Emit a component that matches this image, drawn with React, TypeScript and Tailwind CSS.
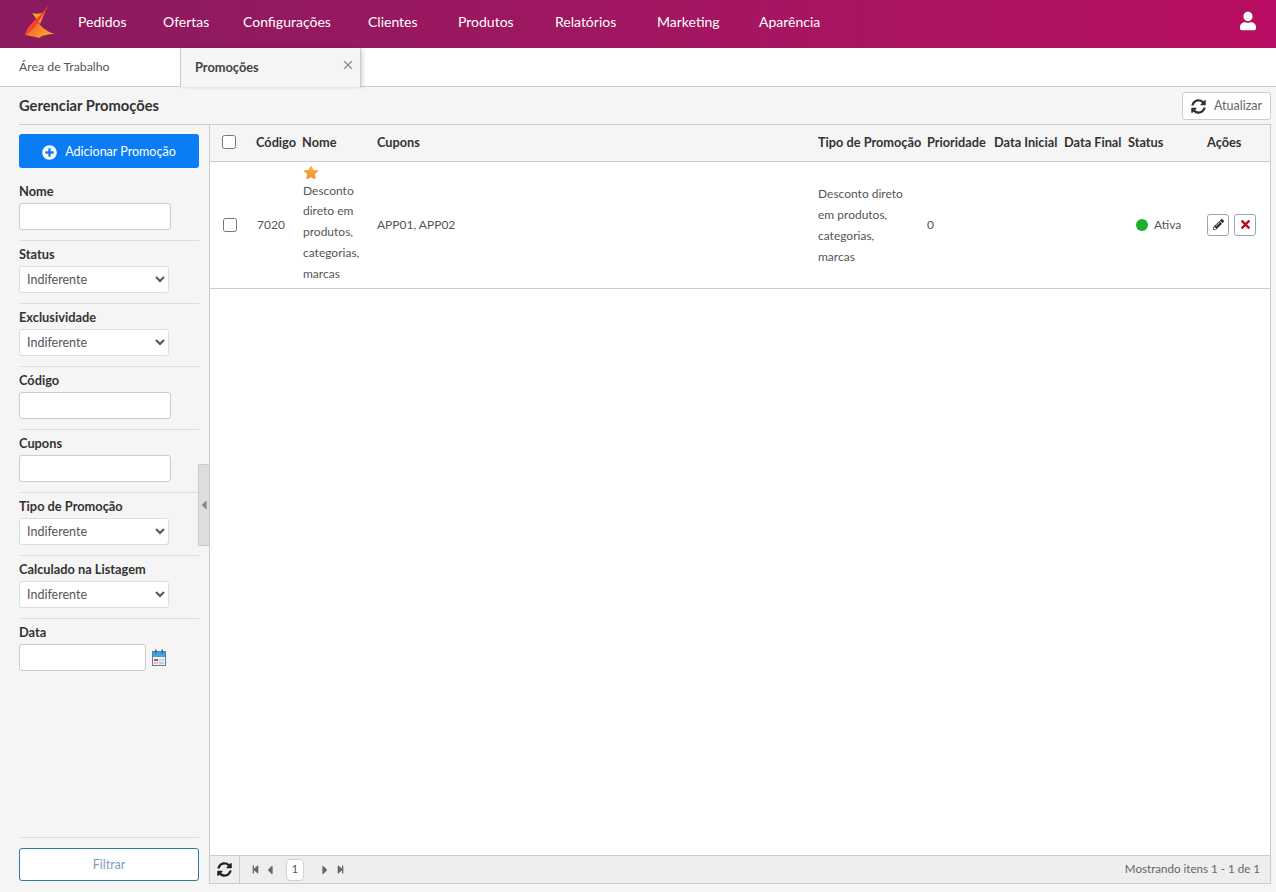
import { X } from "lucide-react";
import { FaUser, FaPencilAlt, FaTimes, FaSyncAlt, FaPlusCircle, FaStepBackward, FaStepForward, FaCaretLeft, FaCaretRight } from "react-icons/fa";

const menu = [
  { label: "Pedidos", width: "w-[85px]" },
  { label: "Ofertas", width: "w-[80px]" },
  { label: "Configurações", width: "w-[125px]" },
  { label: "Clientes", width: "w-[90px]" },
  { label: "Produtos", width: "w-[97px]" },
  { label: "Relatórios", width: "w-[102px]" },
  { label: "Marketing", width: "w-[102px]" },
  { label: "Aparência", width: "w-[70px]" },
];

const inputClass = "block h-[27px] rounded-[3px] border border-[#ccc] bg-white";

function SelectBox() {
  return (
    <select className="block h-[27px] w-[150px] rounded-[3px] border border-[#ddd] bg-white pl-[3px] text-[12.5px] text-[#555]">
      <option>Indiferente</option>
    </select>
  );
}

function Field({ label, type }: { label: string; type: "input" | "select" }) {
  return (
    <div className="h-[63px] border-b border-[#ddd] pt-[4px]">
      <div className="mb-[3px] h-[18px] text-[12.8px] font-bold leading-[18px] text-[#333]">{label}</div>
      {type === "input" ? <div className={`${inputClass} w-[152px]`} /> : <SelectBox />}
    </div>
  );
}

function Logo() {
  return (
    <svg width="34" height="38" viewBox="0 0 34 38" className="mt-[-4px]">
      <defs>
        <linearGradient id="blade" x1="0" y1="1" x2="1" y2="0">
          <stop offset="0" stopColor="#f8482c" />
          <stop offset="1" stopColor="#f2342f" />
        </linearGradient>
        <linearGradient id="foot" x1="0" y1="0" x2="1" y2="0.6">
          <stop offset="0" stopColor="#f4512b" />
          <stop offset="1" stopColor="#fbab2c" />
        </linearGradient>
      </defs>
      <path d="M9 10C13 11 18 11 22 9L17 21Z" fill="#f9a12a" />
      <path d="M15 19C19 25 25 29 32 31C25 31 20 32 16 35C10 33 6 33 2 32C7 29 12 24 15 19Z" fill="url(#foot)" />
      <path d="M27 0C24 6 20 12 16 18C12 24 7 29 2 32C3 27 6 23 9 20C14 15 22 8 27 0Z" fill="url(#blade)" />
    </svg>
  );
}

function StarIcon() {
  return (
    <svg width="16" height="15" viewBox="0 0 16 15" className="mb-[1px] block">
      <defs>
        <linearGradient id="star" x1="0" y1="0" x2="0" y2="1">
          <stop offset="0" stopColor="#fbb54a" />
          <stop offset="1" stopColor="#f0902a" />
        </linearGradient>
      </defs>
      <path d="M8 1.5 9.9 5.4 14.4 6 11.1 9 11.9 13.4 8 11.3 4.1 13.4 4.9 9 1.6 6 6.1 5.4Z" fill="url(#star)" stroke="url(#star)" strokeWidth="1.4" strokeLinejoin="round" />
    </svg>
  );
}

function CalendarIcon() {
  return (
    <svg width="14" height="17" viewBox="0 0 14 17">
      <rect x="0.5" y="2.5" width="13" height="14" fill="#f2f2f2" stroke="#6c7a86" />
      <rect x="1" y="3" width="12" height="5" fill="#3fa3e6" />
      <rect x="3" y="0.5" width="1.5" height="4" fill="#1f6aa5" />
      <rect x="9.5" y="0.5" width="1.5" height="4" fill="#1f6aa5" />
      <rect x="2" y="10" width="4" height="2" fill="#d04a4a" />
      <rect x="7" y="10" width="2" height="2" fill="#c9c9c9" />
      <rect x="10" y="10" width="2" height="2" fill="#c9c9c9" />
      <rect x="2" y="13" width="4" height="2" fill="#c9c9c9" />
      <rect x="7" y="13" width="5" height="2" fill="#c9c9c9" />
    </svg>
  );
}

export default function App() {
  const th = "px-[6px] text-left align-middle text-[12.75px] font-bold text-[#333] whitespace-nowrap";
  const td = "px-[7px] align-middle text-[12px] text-[#555]";
  return (
    <div className="flex h-screen flex-col overflow-hidden bg-[#f5f5f5] font-['Lato','Liberation_Sans',sans-serif] text-[13px]">
      <header className="flex h-[48px] shrink-0 items-center bg-gradient-to-r from-[#8a1a5e] to-[#b80d62] pl-[23px] pr-[20px]">
        <Logo />
        <nav className="mb-[6px] ml-[21px] flex text-[14px] text-white">
          {menu.map((m) => (
            <span key={m.label} className={m.width}>{m.label}</span>
          ))}
        </nav>
        <FaUser className="mb-[6px] ml-auto h-[20px] w-[16px] text-white" />
      </header>

      <div className="flex h-[39px] shrink-0 border-b border-[#ccc] bg-white">
        <div className="flex w-[180px] items-center pl-[19px] text-[12.3px] text-[#555]">Área de Trabalho</div>
        <div className="relative mb-[-1px] flex w-[181px] items-center border-x border-[#ccc] bg-[#f5f5f5] pl-[14px] text-[12.8px] font-bold text-[#444] shadow-[2px_0_4px_rgba(0,0,0,0.15)]">
          Promoções
          <X className="absolute right-[5px] top-[10px] h-[14px] w-[14px] text-[#888]" />
        </div>
      </div>

      <div className="flex h-[37px] shrink-0 items-center justify-between pl-[19px] pr-[5px]">
        <h1 className="text-[14.7px] font-bold text-[#333]">Gerenciar Promoções</h1>
        <button className="flex h-[28px] w-[89px] items-center justify-center gap-[8px] rounded-[3px] border border-[#ccc] bg-white pt-[1px] text-[12.5px] text-[#666]">
          <FaSyncAlt className="h-[15px] w-[15px] text-[#333]" />
          Atualizar
        </button>
      </div>

      <div className="relative ml-[19px] mr-[5px] mb-[8px] flex min-h-0 flex-1 border-t border-[#ccc]">
        <aside className="flex w-[191px] shrink-0 flex-col border-r border-[#ccc] pr-[10px] pt-[9px]">
          <button className="flex h-[34px] w-[180px] items-center justify-center gap-[8px] rounded-[3px] bg-[#0a7df5] pt-[2px] text-[12.5px] text-white">
            <FaPlusCircle className="h-[15px] w-[15px]" />
            Adicionar Promoção
          </button>
          <div className="mt-[10px] w-[180px]">
            <Field label="Nome" type="input" />
            <Field label="Status" type="select" />
            <Field label="Exclusividade" type="select" />
            <Field label="Código" type="input" />
            <Field label="Cupons" type="input" />
            <Field label="Tipo de Promoção" type="select" />
            <Field label="Calculado na Listagem" type="select" />
            <div className="pt-[4px]">
              <div className="mb-[3px] h-[18px] text-[12.8px] font-bold leading-[18px] text-[#333]">Data</div>
              <div className="flex items-center gap-[6px]">
                <div className={`${inputClass} w-[127px]`} />
                <CalendarIcon />
              </div>
            </div>
          </div>
          <div className="mt-auto w-[180px] border-t border-[#ddd] pt-[10px] pb-[3px]">
            <button className="h-[33px] w-full rounded-[3px] border border-[#2b7aa8] bg-white pt-[1px] text-[12.5px] text-[#7c9cc9]">Filtrar</button>
          </div>
        </aside>
        <div className="absolute left-[179px] top-[339px] flex h-[82px] w-[12px] items-center justify-center border border-[#ccc] bg-[#ddd]">
          <FaCaretLeft className="h-[14px] w-[8px] text-[#888]" />
        </div>

        <main className="flex min-w-0 flex-1 flex-col border-r border-b border-[#ccc] bg-white">
          <div className="min-h-0 flex-1">
            <table className="w-full table-fixed border-collapse">
              <colgroup>
                <col className="w-[40px]" />
                <col className="w-[46px]" />
                <col className="w-[75px]" />
                <col className="w-[441px]" />
                <col className="w-[109px]" />
                <col className="w-[67px]" />
                <col className="w-[70px]" />
                <col className="w-[64px]" />
                <col className="w-[79px]" />
                <col />
              </colgroup>
              <thead>
                <tr className="h-[36px] border-b border-[#ccc] bg-[#f5f5f5]">
                  <th className="pb-[2px] pl-[12px] text-left">
                    <input type="checkbox" className="block h-[14px] w-[14px]" />
                  </th>
                  <th className={th}>Código</th>
                  <th className={th}>Nome</th>
                  <th className={th}>Cupons</th>
                  <th className={th}>Tipo de Promoção</th>
                  <th className={th}>Prioridade</th>
                  <th className={th}>Data Inicial</th>
                  <th className={th}>Data Final</th>
                  <th className={th}>Status</th>
                  <th className={th}>Ações</th>
                </tr>
              </thead>
              <tbody>
                <tr className="h-[127px] border-b border-[#ccc]">
                  <td className="pl-[13px]">
                    <input type="checkbox" className="block h-[14px] w-[14px]" />
                  </td>
                  <td className={`${td} text-[11.5px]`}>7020</td>
                  <td className={`${td} leading-[20.7px]`}>
                    <StarIcon />
                    Desconto direto em produtos, categorias, marcas
                  </td>
                  <td className={`${td} pl-[6px] text-[11.5px]`}>APP01, APP02</td>
                  <td className={`${td} pl-[6px] leading-[21px]`}>
                    Desconto direto<br />em produtos,<br />categorias,<br />marcas
                  </td>
                  <td className={`${td} pl-[6px]`}>0</td>
                  <td className={td} />
                  <td className={td} />
                  <td className={`${td} pl-[14px]`}>
                    <span className="flex items-center gap-[6px]">
                      <span className="h-[12px] w-[12px] rounded-full bg-[#1fae2c]" />
                      Ativa
                    </span>
                  </td>
                  <td className="pl-[6px] align-middle">
                    <div className="flex gap-[5px]">
                      <button className="flex h-[22px] w-[22px] items-center justify-center rounded-[3px] border border-[#9aa5ad] bg-white">
                        <FaPencilAlt className="h-[11px] w-[11px] text-[#333]" />
                      </button>
                      <button className="flex h-[22px] w-[22px] items-center justify-center rounded-[3px] border border-[#9aa5ad] bg-white">
                        <FaTimes className="h-[13px] w-[11px] text-[#b01226]" />
                      </button>
                    </div>
                  </td>
                </tr>
              </tbody>
            </table>
          </div>
          <div className="flex h-[28px] shrink-0 items-center border-t border-[#ccc] bg-[#eee] pr-[10px]">
            <div className="flex h-full w-[30px] items-center justify-center border-r border-[#ccc]">
              <FaSyncAlt className="h-[15px] w-[15px] text-[#222]" />
            </div>
            <div className="ml-[11px] flex items-center text-[#666]">
              <FaStepBackward className="h-[9px] w-[9px]" />
              <FaCaretLeft className="ml-[6px] h-[14px] w-[8px]" />
              <span className="ml-[12px] flex h-[22px] w-[18px] items-center justify-center rounded-[4px] border border-[#d8d4c4] bg-white text-[11px] text-[#555]">1</span>
              <FaCaretRight className="ml-[17px] h-[14px] w-[8px]" />
              <FaStepForward className="ml-[7px] h-[9px] w-[9px]" />
            </div>
            <span className="mb-[1px] ml-auto text-[11.6px] text-[#666]">Mostrando itens 1 - 1 de 1</span>
          </div>
        </main>
      </div>
    </div>
  );
}
